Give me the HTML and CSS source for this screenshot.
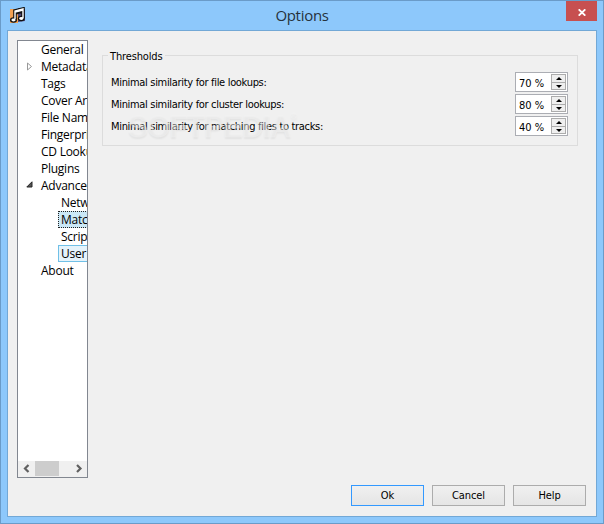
FILE: index.html
```html
<!DOCTYPE html>
<html lang="en">
<head>
<meta charset="utf-8">
<title>Options</title>
<link rel="stylesheet" href="styles.css">
</head>
<body>
<div class="window">
  <header class="titlebar">
    <svg class="app-icon" width="18" height="18" viewBox="0 0 18 18">
      <path d="M1 2h8v14H1z" fill="#f3a052"/><path d="M9 1l7 1v12l-7 1z" fill="#504778"/>
      <path d="M6 12V4l8-2v9M6 6l8-2" fill="none" stroke="#111" stroke-width="3.6"/>
      <ellipse cx="4.5" cy="13" rx="3.5" ry="2.8" fill="#111"/><ellipse cx="12.3" cy="11.5" rx="3.5" ry="2.8" fill="#111"/>
      <path d="M6 12V4l8-2v9M6 5l8-2" fill="none" stroke="#fff" stroke-width="1.4"/>
      <ellipse cx="4.5" cy="13" rx="2.1" ry="1.4" fill="#fff"/><ellipse cx="12.3" cy="11.5" rx="2.1" ry="1.4" fill="#fff"/>
    </svg>
    <h1 class="title">Options</h1>
    <button class="close" aria-label="Close"><svg width="8" height="7" viewBox="0 0 8 7"><path d="M.7.3l6.6 6.4M7.3.3L.7 6.7" stroke="#fff" stroke-width="1.8"/></svg></button>
  </header>
  <main class="client">
    <nav class="tree">
      <ul class="items">
        <li>General</li>
        <li><svg class="arrow" width="7" height="9" viewBox="0 0 7 9"><path d="M1.5 1v7l4-3.5z" fill="#fff" stroke="#999"/></svg>Metadata</li>
        <li>Tags</li>
        <li>Cover Art</li>
        <li>File Naming</li>
        <li>Fingerprinting</li>
        <li>CD Lookup</li>
        <li>Plugins</li>
        <li><svg class="arrow" width="7" height="7" viewBox="0 0 7 7"><path d="M6 .8v5.2H.8z" fill="#555" stroke="#262626"/></svg>Advanced</li>
        <li class="child"><span>Network</span></li>
        <li class="child"><span class="selected">Matching</span></li>
        <li class="child"><span>Scripting</span></li>
        <li class="child"><span class="hover">User Interface</span></li>
        <li>About</li>
      </ul>
      <div class="scrollbar">
        <svg width="17" height="15" viewBox="0 0 17 15"><path d="M10.5 4L7 7.5l3.5 3.5" fill="none" stroke="#606060" stroke-width="2.2"/></svg>
        <div class="thumb"></div>
        <svg class="right" width="17" height="15" viewBox="0 0 17 15"><path d="M7 4l3.5 3.5L7 11" fill="none" stroke="#606060" stroke-width="2.2"/></svg>
      </div>
    </nav>
    <div class="page">
      <section class="group">
        <h2 class="legend">Thresholds</h2>
        <div class="row"><label>Minimal similarity for file lookups:</label><div class="spin"><span>70 %</span><div class="steps"><i class="up"></i><i class="down"></i></div></div></div>
        <div class="row"><label>Minimal similarity for cluster lookups:</label><div class="spin"><span>80 %</span><div class="steps"><i class="up"></i><i class="down"></i></div></div></div>
        <div class="row"><label>Minimal similarity for matching files to tracks:</label><div class="spin"><span>40 %</span><div class="steps"><i class="up"></i><i class="down"></i></div></div></div>
        <div class="watermark">SOFTPEDIA<sup>®</sup></div>
      </section>
      <footer class="buttons"><button class="default">Ok</button><button>Cancel</button><button>Help</button></footer>
    </div>
  </main>
</div>
</body>
</html>
```
FILE: styles.css
```css
* { box-sizing: border-box; }
body { margin: 0; }
.window { width: 604px; height: 524px; padding: 0 6px 6px 6px; display: flex; flex-direction: column; background: #8dc8fb; border: 1px solid #6a9bc8; font: 11px "DejaVu Sans Condensed", "DejaVu Sans", sans-serif; color: #000; }
.titlebar { height: 29px; flex: none; display: grid; grid-template-columns: 31px 1fr 31px; }
.app-icon { margin: 6px 0 0 2px; }
.title { margin: 0; font: 15px/29px "Open Sans", sans-serif; text-align: center; color: #26323c; letter-spacing: -0.3px; }
.close { height: 20px; border: 0; padding: 2px 0 0 1px; background: #c75050; display: flex; align-items: center; justify-content: center; }
.client { flex: 1; display: flex; background: #f0f0f0; border: 1px solid #72a8d6; padding: 9px 17px 10px 9px; }
.tree { width: 71px; height: 438px; flex: none; overflow: hidden; background: #fff; border: 1px solid #828790; display: flex; flex-direction: column; }
.items { list-style: none; margin: 0; padding: 0; flex: 1; overflow: hidden; font: 12px/17px "Open Sans", sans-serif; white-space: nowrap; }
.items li { height: 17px; padding-left: 23px; position: relative; letter-spacing: -0.25px; }
.items .child { padding-left: 40px; }
.child span { display: block; height: 17px; width: 100px; padding-left: 2px; border: 1px solid transparent; line-height: 15px; }
.child .selected { background: #cbe8f6; border: 1px dotted #222; }
.child .hover { background: #e5f3fb; border-color: #70c0e7; }
.arrow { position: absolute; left: 8px; top: 4px; }
.scrollbar { height: 16px; flex: none; display: flex; background: #f0f0f0; }
.thumb { width: 24px; height: 15px; background: #cdcdcd; }
.right { margin-left: auto; }
.page { flex: 1; padding-left: 14px; display: flex; flex-direction: column; justify-content: space-between; }
.group { width: 476px; height: 91px; margin-top: 15px; border: 1px solid #dcdcdc; position: relative; padding: 16px 9px 0 8px; }
.legend { position: absolute; left: 5px; top: -7px; margin: 0; padding: 0 3px 0 2px; background: #f0f0f0; font: 11px/15px "DejaVu Sans Condensed", sans-serif; letter-spacing: -0.15px; }
.row { height: 22px; display: flex; align-items: flex-start; justify-content: space-between; }
.row label { line-height: 22px; white-space: nowrap; letter-spacing: -0.32px; }
.spin { width: 53px; height: 20px; display: flex; justify-content: space-between; padding: 1px; background: #fff; border: 1px solid #abadb3; }
.spin span { padding-left: 2px; line-height: 20px; white-space: nowrap; }
.steps { width: 15px; height: 16px; flex: none; border: 1px solid #acacac; background: #efefef; }
.steps i { height: 6px; display: flex; align-items: center; justify-content: center; }
.steps .up { border-bottom: 1px solid #acacac; height: 8px; }
.steps i::before { content: ""; border: 3px solid transparent; border-top: 0; border-bottom: 3px solid #000; }
.steps .down::before { border-top: 3px solid #000; border-bottom: 0; }
.watermark { position: absolute; left: 25px; top: 50px; font: bold 31px/42px "Liberation Sans", sans-serif; -webkit-text-stroke: 1px rgba(243,243,243,.35); letter-spacing: -1px; color: rgba(243,243,243,.45); text-shadow: 0 2px 2px rgba(0,0,0,.06); transform: scaleX(.965); transform-origin: left; white-space: nowrap; }
.watermark sup { font-size: 9px; line-height: 0; vertical-align: 18px; }
.buttons { display: flex; justify-content: flex-end; gap: 8px; margin-right: -7px; }
.buttons button { width: 73px; height: 21px; padding: 0; border: 1px solid #acacac; background: linear-gradient(#f0f0f0, #e5e5e5); font: 11px/20px "DejaVu Sans Condensed", sans-serif; letter-spacing: -0.1px; color: #000; }
.buttons .default { border-color: #3399ff; }
```
